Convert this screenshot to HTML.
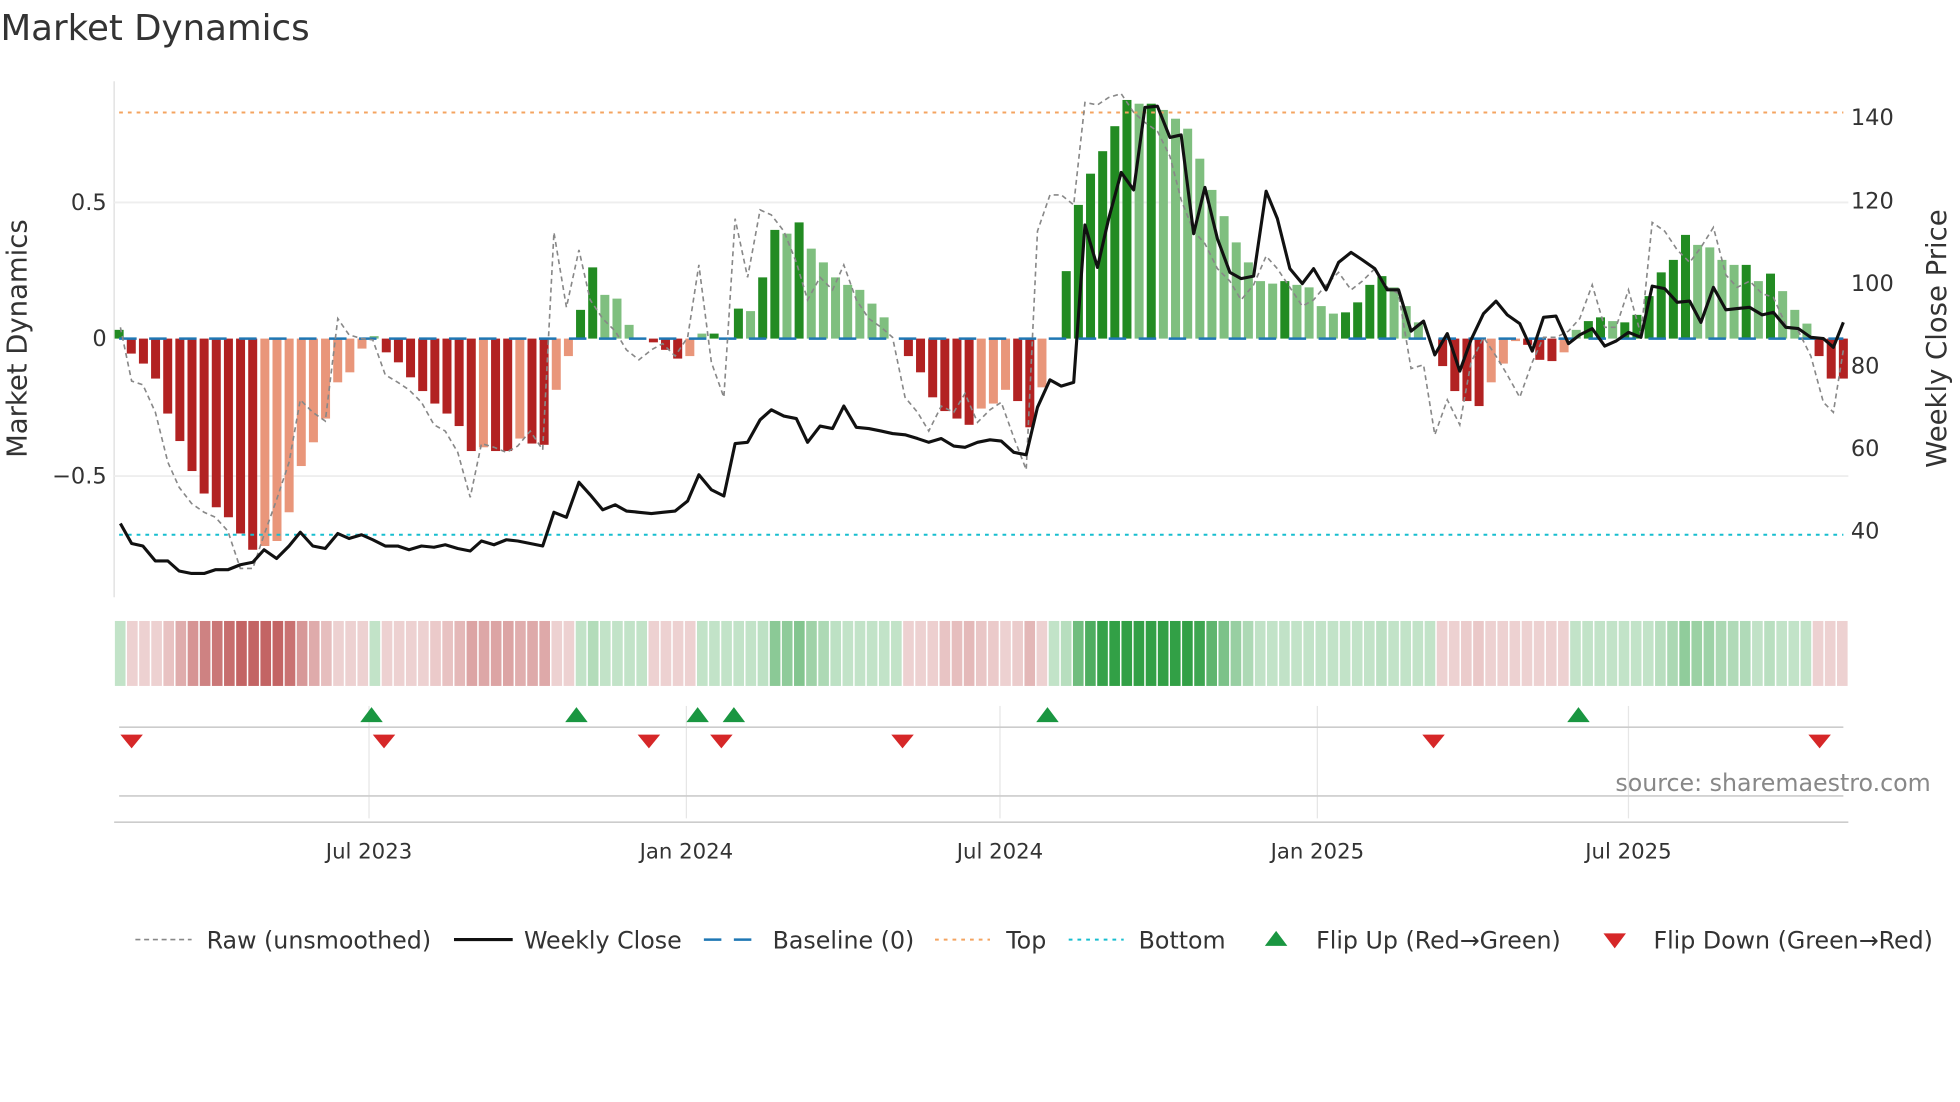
<!DOCTYPE html>
<html><head><meta charset="utf-8"><style>
html,body{margin:0;padding:0;background:#fff;}
svg{display:block;font-family:"DejaVu Sans","Liberation Sans",sans-serif;}
</style></head><body>
<svg id="s" width="1960" height="1102" viewBox="0 0 1568 882" xmlns="http://www.w3.org/2000/svg">
<rect width="1568" height="882" fill="#fff"/>
<text x="0" y="32" font-size="28.5" fill="#333">Market Dynamics</text>
<line x1="91" y1="65" x2="91" y2="478" stroke="#ddd" stroke-width="1"/>
<line x1="91" y1="162" x2="1479" y2="162" stroke="#eee" stroke-width="1.5"/>
<line x1="91" y1="381" x2="1479" y2="381" stroke="#eee" stroke-width="1.5"/>
<g id="bars"></g>
<line x1="95" y1="271" x2="1475" y2="271" stroke="#1f77b4" stroke-width="2" stroke-dasharray="14,10"/>
<line x1="95" y1="90" x2="1475" y2="90" stroke="#f4a460" stroke-width="1.6" stroke-dasharray="3,4"/>
<line x1="95" y1="428" x2="1475" y2="428" stroke="#17becf" stroke-width="1.6" stroke-dasharray="3,4"/>
<polyline id="raw" fill="none" stroke="#888" stroke-width="1.3" stroke-dasharray="4,3"/>
<polyline id="px" fill="none" stroke="#111" stroke-width="2.5" stroke-linejoin="round"/>
<g font-size="18" fill="#333" text-anchor="end">
<text x="85" y="168">0.5</text><text x="85" y="277">0</text><text x="85" y="387">−0.5</text>
</g>
<g font-size="18" fill="#333">
<text x="1481" y="100">140</text><text x="1481" y="167">120</text><text x="1481" y="233">100</text>
<text x="1481" y="299">80</text><text x="1481" y="365">60</text><text x="1481" y="431">40</text>
</g>
<text transform="translate(21,271) rotate(-90)" font-size="22" fill="#333" text-anchor="middle">Market Dynamics</text>
<text transform="translate(1557,271) rotate(-90)" font-size="22" fill="#333" text-anchor="middle">Weekly Close Price</text>
<g id="heat"></g>
<g stroke="#e6e6e6" stroke-width="1">
<line x1="295" y1="565" x2="295" y2="655"/><line x1="549" y1="565" x2="549" y2="655"/><line x1="800" y1="565" x2="800" y2="655"/><line x1="1054" y1="565" x2="1054" y2="655"/><line x1="1303" y1="565" x2="1303" y2="655"/>
</g>
<line x1="95" y1="582" x2="1475" y2="582" stroke="#ccc" stroke-width="1.3"/>
<line x1="95" y1="637" x2="1475" y2="637" stroke="#ccc" stroke-width="1.3"/>
<line x1="91" y1="658" x2="1479" y2="658" stroke="#ccc" stroke-width="1.3"/>
<g id="flips"></g>
<text x="1545" y="633" font-size="19" fill="#888" text-anchor="end">source: sharemaestro.com</text>
<g font-size="17" fill="#333" text-anchor="middle">
<text x="295" y="687">Jul 2023</text><text x="549" y="687">Jan 2024</text><text x="800" y="687">Jul 2024</text><text x="1054" y="687">Jan 2025</text><text x="1303" y="687">Jul 2025</text>
</g>
<g font-size="19" fill="#333">
<line x1="108" y1="752" x2="153" y2="752" stroke="#888" stroke-width="1.3" stroke-dasharray="4,3"/>
<text x="165" y="759">Raw (unsmoothed)</text>
<line x1="363" y1="752" x2="410" y2="752" stroke="#111" stroke-width="2.5"/>
<text x="419" y="759">Weekly Close</text>
<line x1="563" y1="752" x2="606" y2="752" stroke="#1f77b4" stroke-width="2" stroke-dasharray="14,10"/>
<text x="618" y="759">Baseline (0)</text>
<line x1="748" y1="752" x2="792" y2="752" stroke="#f4a460" stroke-width="1.6" stroke-dasharray="3,4"/>
<text x="805" y="759">Top</text>
<line x1="855" y1="752" x2="899" y2="752" stroke="#17becf" stroke-width="1.6" stroke-dasharray="3,4"/>
<text x="911" y="759">Bottom</text>
<polygon points="1012,757 1030,757 1021,745" fill="#1a9641"/>
<text x="1053" y="759">Flip Up (Red→Green)</text>
<polygon points="1283,747 1301,747 1292,759" fill="#d62728"/>
<text x="1323" y="759">Flip Down (Green→Red)</text>
</g>
</svg>
<script>
var NS="http://www.w3.org/2000/svg";
function el(t,a,p){var e=document.createElementNS(NS,t);for(var k in a)e.setAttribute(k,a[k]);document.getElementById(p).appendChild(e);return e;}
var tops=[264,283,291,303,331,353,377,395,406,414,427,440,437,433,410,373,354,335,306,298,279,269,282,290,302,313,323,331,341,361,358,361,361,351,355,356,312,285,248,214,236,239,260,271,274,280,287,285,267,267,271,247,249,222,184,187,178,199,210,222,228,232,243,254,271,285,298,318,329,335,340,327,323,312,321,342,310,271,217,164,139,121,101,80,83,83,88,95,103,127,152,173,194,210,225,227,225,228,230,245,251,250,242,228,221,230,245,258,271,293,313,321,325,306,291,273,276,288,289,282,264,257,254,257,258,252,237,218,208,188,196,198,208,212,212,225,219,233,248,259,285,303,303];
var n=tops.length,sp=1380/(n-1);
var prev=0;
for(var i=0;i<n;i++){
 var x=95+i*sp,v=(271-tops[i])/219,col;
 var dark=Math.abs(v)>=Math.abs(prev)-0.005;
 if(v>0)col=dark?"#228b22":"#7fbf7f";else col=dark?"#b22222":"#e9967a";
 if(Math.abs(tops[i]-271)>0.5){
  var y=Math.min(tops[i],271),h=Math.abs(tops[i]-271);
  el("rect",{x:x-3.6,y:y,width:7.2,height:h,fill:col},"bars");
 }
 prev=v;
 var t=Math.min(1,Math.max(0.3,Math.abs(v)/0.7)),c;
 if(v>=0){c=[Math.round(255-t*(255-50)),Math.round(255-t*(255-160)),Math.round(255-t*(255-70))];}
 else{c=[Math.round(255-t*(255-195)),Math.round(255-t*(255-100)),Math.round(255-t*(255-100))];}
 var x0=91+i*(1388/n);
 el("rect",{x:x0+0.6,y:497,width:1388/n-1.2,height:52,fill:"rgb("+c.join(",")+")"},"heat");
}
var px=[[96,419],[105,435],[114,437],[124,449],[134,449],[143,457],[153,459],[163,459],[172,456],[182,456],[192,452],[202,450],[211,440],[221,447],[231,437],[240,426],[250,437],[260,439],[270,427],[279,431],[289,428],[298,432],[308,437],[318,437],[327,440],[337,437],[347,438],[356,436],[366,439],[376,441],[385,433],[395,436],[405,432],[414,433],[424,435],[434,437],[443,410],[453,414],[463,386],[472,396],[482,408],[492,404],[501,409],[511,410],[521,411],[530,410],[540,409],[550,401],[559,380],[569,392],[579,397],[588,355],[598,354],[608,336],[617,328],[627,333],[637,335],[646,354],[656,341],[666,343],[675,325],[685,342],[695,343],[705,345],[714,347],[724,348],[734,351],[743,354],[753,351],[763,357],[772,358],[782,354],[792,352],[801,353],[811,362],[821,364],[830,326],[840,304],[849,309],[859,306],[868,180],[878,214],[887,175],[897,138],[907,152],[916,86],[926,85],[936,110],[945,108],[955,187],[964,150],[974,191],[984,218],[993,223],[1003,221],[1013,153],[1022,175],[1032,215],[1042,227],[1051,215],[1061,232],[1071,210],[1081,202],[1090,208],[1100,215],[1110,232],[1119,232],[1129,265],[1139,257],[1148,284],[1158,267],[1168,297],[1177,272],[1187,251],[1197,241],[1206,252],[1216,259],[1226,281],[1235,254],[1245,253],[1255,275],[1264,268],[1274,263],[1284,277],[1293,273],[1303,266],[1313,270],[1322,229],[1332,231],[1342,242],[1352,241],[1361,258],[1371,230],[1381,248],[1390,247],[1400,246],[1410,252],[1419,250],[1429,262],[1439,263],[1449,270],[1459,271],[1467,278],[1475,258]];
var raw=[[96,262],[105,305],[114,308],[124,330],[134,370],[143,390],[153,403],[163,410],[172,414],[182,425],[192,455],[202,455],[211,428],[221,400],[231,370],[240,320],[250,330],[260,337],[270,255],[279,268],[289,271],[298,272],[308,300],[318,306],[327,312],[337,322],[347,340],[356,345],[366,362],[376,398],[385,355],[395,358],[405,362],[414,357],[424,345],[434,360],[443,186],[453,246],[463,200],[472,240],[482,255],[492,265],[501,280],[511,288],[521,280],[530,275],[540,285],[550,270],[559,212],[569,290],[579,318],[588,175],[598,222],[608,168],[617,172],[627,185],[637,210],[646,240],[656,222],[666,232],[675,212],[685,240],[695,255],[705,262],[714,270],[724,318],[734,330],[743,345],[753,325],[763,330],[772,315],[782,338],[792,328],[801,322],[811,350],[821,376],[830,185],[840,156],[849,156],[859,164],[868,82],[878,84],[887,78],[897,75],[907,90],[916,98],[926,105],[936,125],[945,160],[955,185],[964,195],[974,215],[984,225],[993,240],[1003,228],[1013,205],[1022,215],[1032,230],[1042,245],[1051,240],[1061,228],[1071,218],[1081,232],[1090,225],[1100,215],[1110,230],[1119,235],[1129,295],[1139,292],[1148,348],[1158,320],[1168,340],[1177,290],[1187,270],[1197,285],[1206,300],[1216,318],[1226,290],[1235,270],[1245,270],[1255,265],[1264,255],[1274,228],[1284,262],[1293,262],[1303,232],[1313,268],[1322,178],[1332,185],[1342,200],[1352,210],[1361,198],[1371,182],[1381,220],[1390,230],[1400,225],[1410,235],[1419,238],[1429,260],[1439,265],[1449,285],[1459,322],[1467,330],[1475,280]];
document.getElementById("px").setAttribute("points",px.map(function(p){return p.join(",")}).join(" "));
document.getElementById("raw").setAttribute("points",raw.map(function(p){return p.join(",")}).join(" "));
[297,461,558,587,838,1263].forEach(function(x){el("polygon",{points:(x-9)+",578 "+(x+9)+",578 "+x+",566",fill:"#1a9641"},"flips");});
[105,307,519,577,722,1147,1456].forEach(function(x){el("polygon",{points:(x-9)+",588 "+(x+9)+",588 "+x+",599",fill:"#d62728"},"flips");});
</script>
</body></html>
